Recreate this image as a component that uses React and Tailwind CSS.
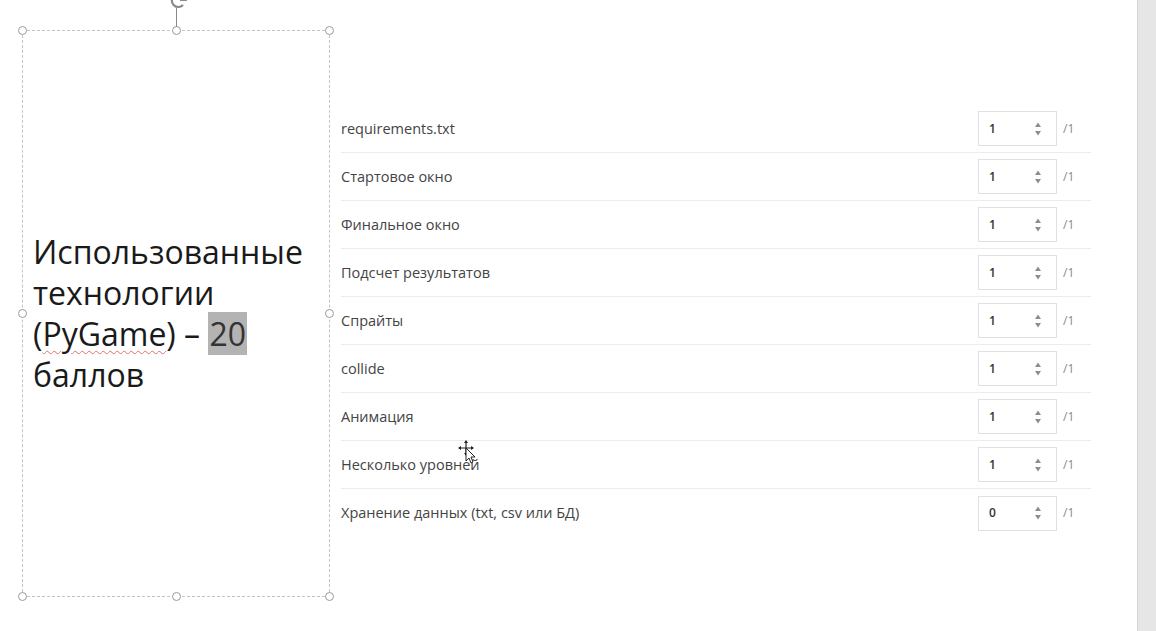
import React from "react";

const rows = [
  ["requirements.txt", "1"],
  ["Стартовое окно", "1"],
  ["Финальное окно", "1"],
  ["Подсчет результатов", "1"],
  ["Спрайты", "1"],
  ["collide", "1"],
  ["Анимация", "1"],
  ["Несколько уровней", "1"],
  ["Хранение данных (txt, csv или БД)", "0"],
];

function Handle({ className }) {
  return (
    <div
      className={
        "absolute w-[9px] h-[9px] rounded-full border-[1.5px] border-[#9a9a9a] bg-white " +
        className
      }
    />
  );
}

function Spinner() {
  return (
    <svg width="8" height="16" viewBox="0 0 8 16" className="block">
      <path d="M4 1.5 L7 6 L1 6 Z" fill="#8e8e8e" />
      <path d="M4 14.5 L7 10 L1 10 Z" fill="#8e8e8e" />
    </svg>
  );
}

export default function App() {
  return (
    <div className="w-[1156px] h-[631px] bg-white flex overflow-hidden relative">
      <div className="flex-1 flex">
        {/* slide text box */}
        <div className="pl-[22px] pt-[30px]">
          <div className="relative w-[308px] h-[567px] border border-dashed border-[#c4c4c4] flex items-center">
            <div
              className="pl-[10px] pb-[2px] text-[32px] leading-[41px] text-[#1a1a1a]"
              style={{ fontFamily: '"Open Sans", "Noto Sans", sans-serif' }}
            >
              Использованные
              <br />
              технологии
              <br />
              (<span className="underline decoration-wavy decoration-[#e07070] decoration-1 underline-offset-4">PyGame</span>)&nbsp;–&nbsp;<span className="bg-[#b3b3b3] text-[#333] px-[1px]">20</span>
              <br />
              баллов
            </div>
            <Handle className="-left-[5px] -top-[5px]" />
            <Handle className="left-[149px] -top-[5px]" />
            <Handle className="-right-[5px] -top-[5px]" />
            <Handle className="-left-[5px] top-[278px]" />
            <Handle className="-right-[5px] top-[278px]" />
            <Handle className="-left-[5px] -bottom-[5px]" />
            <Handle className="left-[149px] -bottom-[5px]" />
            <Handle className="-right-[5px] -bottom-[5px]" />
            {/* rotation stem */}
            <div className="absolute left-[153px] -top-[23px] w-px h-[19px] bg-[#8a8a8a]" />
            <svg
              className="absolute left-[146px] -top-[40px]"
              width="20"
              height="18"
              viewBox="0 0 20 18"
            >
              <path
                d="M14 5 A6.5 6.5 0 1 0 14 14"
                stroke="#8a8a8a"
                strokeWidth="2.2"
                fill="none"
              />
              <path d="M11 9 L17 9 L17 3" stroke="#8a8a8a" strokeWidth="1.8" fill="none" />
            </svg>
          </div>
        </div>

        {/* criteria list */}
        <div
          className="ml-[11px] pt-[105px] w-[750px] flex flex-col"
          style={{ fontFamily: '"Open Sans", "Noto Sans", sans-serif' }}
        >
          {rows.map(([label, val], i) => (
            <div
              key={label}
              className={
                "h-[48px] flex items-center " +
                (i < rows.length - 1 ? "border-b border-[#ececec]" : "")
              }
            >
              <div className="flex-1 text-[14.5px] text-[#444]">{label}</div>
              <div className="w-[79px] h-[35px] border border-[#e0e0e0] flex items-center pl-[10px] pr-[14px]">
                <span className="flex-1 text-[12px] font-semibold text-[#333]">{val}</span>
                <Spinner />
              </div>
              <div className="w-[34px] pl-[6px] text-[12px] text-[#8a8a8a]">/1</div>
            </div>
          ))}
        </div>
      </div>

      {/* right scrollbar strip */}
      <div className="w-[19px] h-full bg-[#e6e6e6] border-l border-[#d6d6d6]" />

      {/* move cursor */}
      <svg
        className="absolute left-[458px] top-[440px]"
        width="20"
        height="26"
        viewBox="0 0 20 26"
      >
        <path d="M8 1 L8 15 M1 8 L15 8" stroke="#222" strokeWidth="1.2" />
        <path d="M8 0 L6 3 L10 3 Z M8 16 L6 13 L10 13 Z M0 8 L3 6 L3 10 Z M16 8 L13 6 L13 10 Z" fill="#222" />
        <path d="M8 8 L8 21 L11 18 L13 23 L15 22 L13 17 L17 17 Z" fill="#fff" stroke="#222" strokeWidth="1" />
      </svg>
    </div>
  );
}
